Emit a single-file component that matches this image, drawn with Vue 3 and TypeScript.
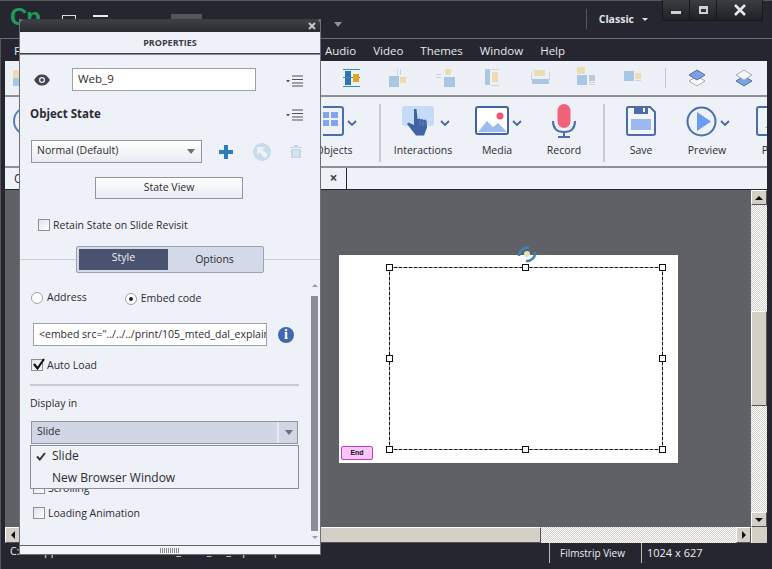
<script setup lang="ts">
interface Shape {
  x: number
  y: number
  w: number
  h: number
  fill: string
}

const B = '#a9c6e3'
const Y = '#ecdcb0'
const L = '#c5d6ea'

// align buttons, only the ones that stick out from behind the panel
const alignIcons: { id: number; gap: number; shapes: Shape[] }[] = [
  { id: 1, gap: 315, shapes: [
    { x: 3, y: 3, w: 17, h: 1, fill: '#3a8fb5' },
    { x: 3, y: 20, w: 17, h: 1, fill: '#3a8fb5' },
    { x: 5, y: 5, w: 6, h: 14, fill: '#2f75b5' },
    { x: 3, y: 11, w: 17, h: 1, fill: '#3a8fb5' },
    { x: 13, y: 8, w: 6, h: 8, fill: '#e2a81e' },
  ] },
  { id: 2, gap: 21, shapes: [
    { x: 4, y: 10, w: 10, h: 11, fill: B },
    { x: 15, y: 11, w: 6, h: 6, fill: Y },
    { x: 12, y: 3, w: 1, h: 6, fill: L },
    { x: 15, y: 3, w: 1, h: 6, fill: L },
  ] },
  { id: 3, gap: 24, shapes: [
    { x: 12, y: 3, w: 6, h: 6, fill: Y },
    { x: 11, y: 11, w: 11, h: 10, fill: B },
    { x: 3, y: 8, w: 5, h: 1, fill: L },
    { x: 3, y: 11, w: 5, h: 1, fill: L },
  ] },
  { id: 4, gap: 24, shapes: [
    { x: 4, y: 3, w: 5, h: 16, fill: B },
    { x: 11, y: 6, w: 6, h: 10, fill: Y },
    { x: 10, y: 3, w: 8, h: 1, fill: L },
    { x: 10, y: 19, w: 8, h: 1, fill: L },
  ] },
  { id: 5, gap: 23, shapes: [
    { x: 6, y: 4, w: 11, h: 6, fill: Y },
    { x: 4, y: 13, w: 17, h: 5, fill: B },
    { x: 3, y: 6, w: 1, h: 8, fill: L },
    { x: 21, y: 6, w: 1, h: 8, fill: L },
  ] },
  { id: 6, gap: 21, shapes: [
    { x: 4, y: 1, w: 8, h: 7, fill: Y },
    { x: 4, y: 9, w: 10, h: 10, fill: B },
    { x: 16, y: 9, w: 6, h: 6, fill: '#b9cbd9' },
    { x: 16, y: 16, w: 6, h: 1, fill: L },
    { x: 16, y: 18, w: 6, h: 1, fill: L },
  ] },
  { id: 7, gap: 24, shapes: [
    { x: 3, y: 5, w: 10, h: 10, fill: B },
    { x: 14, y: 7, w: 6, h: 6, fill: Y },
    { x: 14, y: 14, w: 6, h: 1, fill: L },
  ] },
]

const handles = [
  { id: 'tl', cls: 'h-left h-top' },
  { id: 'tc', cls: 'h-mid h-top' },
  { id: 'tr', cls: 'h-right h-top' },
  { id: 'ml', cls: 'h-left h-center' },
  { id: 'mr', cls: 'h-right h-center' },
  { id: 'bl', cls: 'h-left h-bottom' },
  { id: 'bc', cls: 'h-mid h-bottom' },
  { id: 'br', cls: 'h-right h-bottom' },
]

const menuItems = ['Audio', 'Video', 'Themes', 'Window', 'Help']
</script>

<template>
  <div class="app">
    <header class="titlebar">
      <div class="logo">Cp</div>
      <span class="tb-box tb-box-a"></span>
      <span class="tb-box tb-box-b"></span>
      <span class="tb-box tb-box-c"></span>
      <span class="tb-caret"></span>
      <div class="workspace-switch">
        <span class="switch-sep"></span>
        <span class="switch-label">Classic</span>
        <span class="switch-caret"></span>
      </div>
      <div class="win-buttons">
        <div class="win-btn win-min"><span></span></div>
        <div class="win-btn win-max"><span></span></div>
        <div class="win-btn win-close">
          <svg width="14" height="12" viewBox="0 0 14 12"><path d="M2 1l10 10M12 1L2 11" stroke="#e4e5e8" stroke-width="2.6" /></svg>
        </div>
      </div>
    </header>

    <nav class="menubar">
      <span class="menu-first">F</span>
      <span v-for="m in menuItems" :key="m" class="menu-item">{{ m }}</span>
    </nav>

    <div class="align-bar">
      <span class="left-stub-square"></span>
      <template v-for="icon in alignIcons" :key="icon.id">
        <svg class="align-icon" :style="{ marginLeft: icon.gap + 'px' }" width="24" height="24" viewBox="0 0 24 24">
          <rect v-for="(s, i) in icon.shapes" :key="i" :x="s.x" :y="s.y" :width="s.w" :height="s.h" :fill="s.fill" />
        </svg>
      </template>
      <span class="align-sep"></span>
      <svg class="layer-icon layer-first" width="20" height="20" viewBox="0 0 20 20">
        <path d="M10 8l8 5-8 5-8-5z" fill="#fff" stroke="#a5a8b0" />
        <path d="M10 2l8 5-8 5-8-5z" fill="#7f9fe4" stroke="#4d6ca8" />
      </svg>
      <svg class="layer-icon layer-second" width="20" height="20" viewBox="0 0 20 20">
        <path d="M10 8l8 5-8 5-8-5z" fill="#7f9fe4" stroke="#4d6ca8" />
        <path d="M10 2l8 5-8 5-8-5z" fill="#f5f6fb" stroke="#a5a8b0" />
      </svg>
    </div>

    <div class="ribbon">
      <div class="rb-stub"></div>
      <div class="rb-item rb-objects">
        <svg width="22" height="30" viewBox="0 0 22 30">
          <path d="M-8 1h26a2 2 0 0 1 2 2v24a2 2 0 0 1-2 2H-8" fill="none" stroke="#4a6ea9" stroke-width="2" />
          <path d="M0 6h6v6H0zM8 6h7v6H8zM0 14h6v6H0zM8 14h7v6H8z" fill="#7fa6ee" />
        </svg>
        <svg class="chev" width="10" height="6" viewBox="0 0 10 6"><path d="M1 1l4 4 4-4" fill="none" stroke="#44689f" stroke-width="1.8" /></svg>
        <span class="rb-label">Objects</span>
      </div>
      <span class="rb-sep rb-sep-a"></span>
      <div class="rb-item rb-inter">
        <svg width="32" height="30" viewBox="0 0 32 30">
          <rect x="0" y="0" width="32" height="20" rx="2" fill="#c6dbf8" />
          <path d="M12 3h2.500l1 10 2-.5 1 1 2-.5 1 1 2-.5 1.500 2v6l-3 8H14L5 18l1.500-1.500L12 19z" fill="#3f63a5" />
          <path d="M18 14v5M21 15v5M24 15v5" stroke="#7d97c8" stroke-width="0.7" />
        </svg>
        <svg class="chev" width="10" height="6" viewBox="0 0 10 6"><path d="M1 1l4 4 4-4" fill="none" stroke="#44689f" stroke-width="1.8" /></svg>
        <span class="rb-label">Interactions</span>
      </div>
      <div class="rb-item rb-media">
        <svg width="34" height="30" viewBox="0 0 34 30">
          <rect x="1" y="1" width="32" height="27" rx="2" fill="#fff" stroke="#3f63a5" stroke-width="2" />
          <path d="M3 26l9-11 6 6 5-4 8 8v1H3z" fill="#9cbcf0" />
          <circle cx="25" cy="10" r="3.5" fill="#f0566f" />
        </svg>
        <svg class="chev" width="10" height="6" viewBox="0 0 10 6"><path d="M1 1l4 4 4-4" fill="none" stroke="#44689f" stroke-width="1.8" /></svg>
        <span class="rb-label">Media</span>
      </div>
      <div class="rb-item rb-record">
        <svg width="24" height="34" viewBox="0 0 24 34">
          <rect x="5.500" y="0" width="13" height="24" rx="6.500" fill="#f0627a" />
          <path d="M1 17c0 7 4 11 11 11s11-4 11-11" fill="none" stroke="#4a6ea9" stroke-width="2" />
          <path d="M12 28v4M6 33h12" stroke="#4a6ea9" stroke-width="2" />
        </svg>
        <span class="rb-label">Record</span>
      </div>
      <span class="rb-sep rb-sep-b"></span>
      <div class="rb-item rb-save">
        <svg width="30" height="30" viewBox="0 0 30 30">
          <path d="M2 1h22l5 5v21a2 2 0 0 1-2 2H3a2 2 0 0 1-2-2V2z" fill="#f3f5fb" stroke="#4a6ea9" stroke-width="2" />
          <path d="M8 1h14v7H8z" fill="#4a6ea9" />
          <rect x="17" y="2" width="2" height="4" fill="#f3f5fb" />
          <rect x="5" y="13" width="20" height="11" fill="#9cb8f0" />
        </svg>
        <span class="rb-label">Save</span>
      </div>
      <div class="rb-item rb-preview">
        <svg width="31" height="31" viewBox="0 0 31 31">
          <circle cx="15.500" cy="15.500" r="14" fill="none" stroke="#4a6ea9" stroke-width="2" />
          <path d="M11 6l14 9.500L11 25z" fill="#6c9bf2" />
        </svg>
        <svg class="chev" width="10" height="6" viewBox="0 0 10 6"><path d="M1 1l4 4 4-4" fill="none" stroke="#44689f" stroke-width="1.8" /></svg>
        <span class="rb-label">Preview</span>
      </div>
      <div class="rb-item rb-last">
        <svg width="14" height="30" viewBox="0 0 14 30">
          <path d="M14 1H3a2 2 0 0 0-2 2v24a2 2 0 0 0 2 2h11" fill="none" stroke="#4a6ea9" stroke-width="2" />
          <path d="M9 22l4-4 1 1v3z" fill="#86b98a" />
        </svg>
        <span class="rb-label">P</span>
      </div>
    </div>

    <div class="tabbar">
      <span class="tab-first">O</span>
      <span class="tab-close">×</span>
    </div>

    <main class="workspace">
      <div class="canvas-row">
        <div class="canvas">
          <div class="slide">
            <svg class="spinner" width="20" height="17" viewBox="0 0 20 17">
              <path d="M2 10a8 8 0 0 1 10-8M18 6a8 8 0 0 1-9 9" fill="none" stroke="#3a84b8" stroke-width="2.500" />
              <circle cx="10" cy="8" r="3" fill="#dfe3b8" />
            </svg>
            <div class="web-object">
              <span v-for="h in handles" :key="h.id" class="handle" :class="h.cls"></span>
            </div>
            <div class="end-btn">End</div>
          </div>
        </div>
        <div class="vscroll">
          <div class="sb-btn"><span class="tri tri-up"></span></div>
          <div class="sb-track sb-v-a"></div>
          <div class="sb-thumb sb-v-thumb"></div>
          <div class="sb-track sb-v-b"></div>
          <div class="sb-btn"><span class="tri tri-down"></span></div>
        </div>
      </div>
      <div class="hscroll">
        <div class="sb-btn"><span class="tri tri-left"></span></div>
        <div class="sb-thumb sb-h-thumb"></div>
        <div class="sb-track sb-h-track"></div>
        <div class="sb-btn"><span class="tri tri-right"></span></div>
        <div class="sb-corner"></div>
      </div>
    </main>

    <footer class="statusbar">
      <span class="status-path">C:\xampp\htdocs\onscreenos\105_mted_dal_explain.cptx</span>
      <span class="status-cell status-film">Filmstrip View</span>
      <span class="status-cell status-size">1024 x 627</span>
    </footer>

    <!-- floating properties panel -->
    <aside class="panel">
      <div class="panel-grip">
        <svg width="8" height="8" viewBox="0 0 8 8"><path d="M1 1l6 6M7 1L1 7" stroke="#c4c6cb" stroke-width="2" /></svg>
      </div>
      <div class="panel-head">PROPERTIES</div>

      <div class="row name-row">
        <svg class="eye" width="16" height="12" viewBox="0 0 16 12">
          <path d="M0 6c3-4.500 5-5.500 8-5.500S13 1.500 16 6c-3 4.500-5 5.500-8 5.500S3 10.500 0 6z" fill="#44464e" />
          <circle cx="8" cy="6" r="3" fill="#eff1f8" />
          <circle cx="8" cy="6" r="1.800" fill="#44464e" />
        </svg>
        <div class="input name-input">Web_9</div>
        <svg class="list-menu" width="18" height="12" viewBox="0 0 18 12">
          <path d="M0 5h4L2 7.500z" fill="#555" />
          <path d="M6 1h11M6 4.500h11M6 8h11M6 11h11" stroke="#50525a" stroke-width="1" />
        </svg>
      </div>

      <div class="row state-head">
        <span class="state-title">Object State</span>
        <svg class="list-menu" width="18" height="12" viewBox="0 0 18 12">
          <path d="M0 5h4L2 7.500z" fill="#555" />
          <path d="M6 1h11M6 4.500h11M6 8h11M6 11h11" stroke="#50525a" stroke-width="1" />
        </svg>
      </div>

      <div class="row state-select-row">
        <div class="select state-select">
          <span class="sel-text">Normal (Default)</span>
          <span class="sel-caret"></span>
        </div>
        <svg class="ic-plus" width="14" height="14" viewBox="0 0 14 14">
          <path d="M5 0h4v5h5v4H9v5H5V9H0V5h5z" fill="#2f7dbb" />
        </svg>
        <svg class="ic-go" width="18" height="18" viewBox="0 0 18 18">
          <circle cx="9" cy="9" r="9" fill="#c7dbe8" />
          <path d="M4 4h8l-2.500 2.500L15 12l-3 3-5.500-5.500L4 12z" fill="#eff1f8" />
        </svg>
        <svg class="ic-trash" width="12" height="13" viewBox="0 0 12 13">
          <path d="M0 2h12v1H0zM4 0h4v2H4zM1 4h10v9H1z" fill="#c3d6e3" />
          <path d="M4 5v7M6 5v7M8 5v7" stroke="#eff1f8" stroke-width="0.800" />
        </svg>
      </div>

      <div class="row state-view-row">
        <button class="btn state-view">State View</button>
      </div>

      <label class="row check-row retain-row">
        <span class="check"></span>
        <span class="label">Retain State on Slide Revisit</span>
      </label>

      <div class="tabs-wrap">
        <div class="tabs">
          <div class="tab-on">Style</div>
          <div class="tab-off">Options</div>
        </div>
      </div>

      <div class="panel-scroll">
        <div class="scroll-body">
          <div class="radio-row">
            <span class="radio-opt">
              <span class="radio"></span>
              <span class="label label-up">Address</span>
            </span>
            <span class="radio-opt radio-embed">
              <span class="radio radio-on"></span>
              <span class="label label-up">Embed code</span>
            </span>
          </div>

          <div class="embed-row">
            <div class="input embed-input">&lt;embed src="../../../print/105_mted_dal_explain.swf"</div>
            <div class="info">i</div>
          </div>

          <div class="check-row auto-row">
            <span class="check check-on">
              <svg width="14" height="13" viewBox="0 0 14 13"><path d="M2 6l3.500 4.500L12 1" fill="none" stroke="#111" stroke-width="2.200" /></svg>
            </span>
            <span class="label">Auto Load</span>
          </div>

          <div class="divider"></div>

          <div class="label display-label">Display in</div>

          <div class="display-wrap">
            <div class="select display-select">
              <span class="sel-text">Slide</span>
              <span class="sel-split"></span>
              <span class="sel-caret"></span>
            </div>
            <ul class="dropdown">
              <li>
                <svg width="10" height="9" viewBox="0 0 10 9"><path d="M1 4.500L3.800 7.500 9 1" fill="none" stroke="#333" stroke-width="2" /></svg>
                <span>Slide</span>
              </li>
              <li><span>New Browser Window</span></li>
            </ul>
          </div>

          <div class="check-row scrolling-row">
            <span class="check"></span>
            <span class="label">Scrolling</span>
          </div>
          <div class="check-row loading-row">
            <span class="check"></span>
            <span class="label">Loading Animation</span>
          </div>
        </div>
        <div class="panel-sb">
          <span class="tri-small tri-small-up"></span>
          <div class="panel-sb-thumb"></div>
          <span class="tri-small tri-small-down"></span>
        </div>
      </div>

      <div class="panel-foot"><span class="foot-grip"></span></div>
    </aside>
  </div>
</template>

<style scoped>
.app {
  position: relative;
  width: 772px;
  height: 569px;
  overflow: hidden;
  display: flex;
  flex-direction: column;
  background: #25262f;
  box-shadow: inset 1px 0 0 #55565c;
  font-family: "Open Sans", "Liberation Sans", sans-serif;
  font-size: 10.500px;
  color: #2b2c30;
}

/* title bar */
.titlebar {
  position: relative;
  flex: 0 0 39px;
  display: flex;
  border-top: 1px solid #55565c;
  border-bottom: 1px solid #6d6e74;
  box-sizing: border-box;
  background: #25262f;
}
.logo {
  margin: 3px 0 0 10px;
  font-family: "Liberation Sans", sans-serif;
  font-size: 24px;
  font-weight: 700;
  color: #1e9b5c;
  line-height: 26px;
  letter-spacing: -1px;
}
.tb-box {
  position: absolute;
  top: 14px;
  height: 8px;
  box-sizing: border-box;
}
.tb-box-a { left: 62px; width: 14px; border: 1px solid #dcdcdc; }
.tb-box-b { left: 93px; width: 15px; border-top: 2px solid #e8e8e8; }
.tb-box-c { left: 171px; width: 31px; top: 13px; background: #52545f; height: 8px; }
.tb-caret {
  position: absolute;
  left: 334px;
  top: 21px;
  border: 4px solid transparent;
  border-top: 5px solid #8f9096;
}
.workspace-switch {
  margin-left: auto;
  display: flex;
  align-items: center;
  height: 20px;
  margin-top: 8px;
  margin-right: 124px;
}
.switch-sep { width: 1px; height: 20px; background: #55565c; margin-right: 12px; }
.switch-label { color: #e2e3e6; font-weight: 700; font-size: 10.500px; }
.switch-caret {
  margin: 3px 0 0 8px;
  border: 3px solid transparent;
  border-top: 3px solid #e2e3e6;
}
.win-buttons {
  position: absolute;
  right: 9px;
  top: -1px;
  display: flex;
  height: 20px;
  background: linear-gradient(#3c3d43, #1f2025);
  border: 1px solid #17181c;
  border-top: none;
  border-radius: 0 0 3px 3px;
}
.win-btn {
  display: flex;
  align-items: center;
  justify-content: center;
  width: 27px;
  box-sizing: border-box;
  border-right: 1px solid #17181c;
}
.win-close { width: 45px; border-right: none; }
.win-min span { width: 10px; height: 3px; background: #cfd0d4; margin-top: 4px; }
.win-max span { width: 9px; height: 8px; box-sizing: border-box; border: 2px solid #cfd0d4; border-top-width: 3px; }

/* menu */
.menubar {
  flex: 0 0 22px;
  display: flex;
  align-items: center;
  gap: 17px;
  color: #e6e7ea;
  font-size: 11.500px;
}
.menu-first { margin-left: 14px; margin-right: 288px; }

/* toolbars */
.align-bar {
  flex: 0 0 36px;
  margin: 0 5px;
  display: flex;
  align-items: center;
  background: #eef0f7;
  border-bottom: 2px solid #8f9196;
  box-sizing: border-box;
  padding-left: 8px;
}
.left-stub-square {
  flex: none;
  width: 12px;
  height: 16px;
  background: linear-gradient(#ecdcb0 50%, #a9c6e3 50%);
}
.align-icon { flex: none; }
.align-sep { flex: none; width: 1px; height: 20px; background: #c4c6cc; margin-left: 20px; }
.layer-icon { flex: none; }
.layer-first { margin-left: 21px; }
.layer-second { margin-left: 27px; }

.ribbon {
  flex: 0 0 71px;
  margin: 0 5px;
  position: relative;
  display: flex;
  background: #eff1f8;
  border-bottom: 2px solid #8f9196;
  box-sizing: border-box;
  overflow: hidden;
}
.rb-stub {
  flex: none;
  width: 30px;
  height: 30px;
  margin: 9px 0 0 8px;
  border: 2px solid #5a7db5;
  border-radius: 50%;
  box-sizing: border-box;
}
.rb-item {
  position: relative;
  flex: none;
  display: flex;
  align-items: flex-start;
  padding-top: 9px;
  box-sizing: border-box;
}
.rb-label {
  position: absolute;
  top: 46px;
  left: 50%;
  transform: translateX(-50%);
  white-space: nowrap;
  font-size: 10.500px;
}
.chev { margin: 14px 0 0 5px; flex: none; }
.rb-objects { margin-left: 280px; }
.rb-objects .chev { margin-left: 2px; }
.rb-objects .rb-label { left: 11px; }
.rb-sep { width: 2px; height: 58px; margin-top: 7px; background: #c6c8ce; flex: none; }
.rb-sep-a { margin-left: 22px; }
.rb-inter { margin-left: 21px; }
.rb-inter .chev { margin-left: 6px; }
.rb-inter .rb-label { left: 21px; }
.rb-media { margin-left: 25px; }
.rb-media .chev { margin-left: 3px; }
.rb-media .rb-label { left: 22px; }
.rb-record { margin-left: 30px; padding-top: 7px; }
.rb-sep-b { margin-left: 27px; }
.rb-save { margin-left: 21px; }
.rb-preview { margin-left: 30px; }
.rb-preview .chev { margin-left: 3px; }
.rb-preview .rb-label { left: 21px; }
.rb-last { margin-left: 26px; }
.rb-last .rb-label { left: 9px; }

.tabbar {
  flex: 0 0 22px;
  margin: 0 5px;
  position: relative;
  display: flex;
  align-items: center;
  background: #eff1f8;
  border-bottom: 1px solid #25262f;
  box-sizing: border-box;
}
.tab-first { margin-left: 9px; font-size: 12px; width: 10px; }
.tab-close {
  margin-left: 297px;
  width: 25px;
  height: 21px;
  text-align: center;
  line-height: 19px;
  font-size: 14px;
  font-weight: 700;
  color: #444;
  border-right: 1px solid #25262f;
}

/* canvas */
.workspace {
  flex: 0 0 353px;
  margin: 0 5px;
  display: flex;
  flex-direction: column;
  background: #5f6167;
}
.canvas-row { flex: 1; display: flex; min-height: 0; }
.canvas { flex: 1; position: relative; }
.slide {
  position: absolute;
  left: 334px;
  top: 65px;
  width: 339px;
  height: 208px;
  background: #fff;
}
.spinner { position: absolute; left: 178px; top: -9px; }
.web-object {
  position: absolute;
  left: 50px;
  top: 12px;
  width: 274px;
  height: 183px;
  box-sizing: border-box;
  border: 1px dashed #111;
  background: #a2a2a2;
}
.web-object::before {
  content: '';
  position: absolute;
  inset: 0;
  background: #fff;
}
.handle {
  position: absolute;
  width: 7px;
  height: 7px;
  box-sizing: border-box;
  background: #fff;
  border: 1px solid #111;
}
.h-left { left: -4px; }
.h-mid { left: 132px; }
.h-right { right: -4px; }
.h-top { top: -4px; }
.h-center { top: 87px; }
.h-bottom { bottom: -4px; }
.end-btn {
  position: absolute;
  left: 2px;
  top: 191px;
  width: 32px;
  height: 14px;
  box-sizing: border-box;
  border: 1px solid #c040c0;
  border-radius: 2px;
  background: #fbc4fb;
  text-align: center;
  font-family: "Liberation Sans", sans-serif;
  font-size: 7px;
  font-weight: 700;
  line-height: 11px;
  color: #111;
}
.vscroll {
  flex: 0 0 16px;
  display: flex;
  flex-direction: column;
}
.hscroll { flex: 0 0 16px; display: flex; }
.sb-btn {
  flex: 0 0 15px;
  height: 15px;
  width: 15px;
  display: flex;
  align-items: center;
  justify-content: center;
  background: #d4d0c8;
  border: 1px solid;
  border-color: #fff #55565c #55565c #fff;
  box-sizing: border-box;
}
.vscroll .sb-btn { width: 16px; flex-basis: 15px; }
.hscroll .sb-btn { height: 16px; }
.sb-track {
  background: repeating-conic-gradient(#d4d0c8 0 25%, #fff 0 50%) 0 0 / 2px 2px;
}
.sb-thumb {
  background: #d4d0c8;
  border: 1px solid;
  border-color: #fff #55565c #55565c #fff;
  box-sizing: border-box;
}
.sb-v-a { flex: 0 0 106px; }
.sb-v-thumb { flex: 0 0 95px; }
.sb-v-b { flex: 1; }
.sb-h-thumb { flex: 0 0 521px; }
.sb-h-track { flex: 1; }
.sb-corner { flex: 0 0 16px; background: #d4d0c8; border-left: 1px solid #fff; box-sizing: border-box; }
.tri { width: 0; height: 0; border: 4px solid transparent; }
.tri-up { border-bottom: 4px solid #111; margin-top: -4px; }
.tri-down { border-top: 4px solid #111; margin-top: 4px; }
.tri-left { border-right: 4px solid #111; margin-left: -4px; }
.tri-right { border-left: 4px solid #111; margin-left: 4px; }

/* status bar */
.statusbar {
  flex: 1;
  display: flex;
  align-items: flex-start;
  color: #eceded;
  position: relative;
}
.status-path { margin: 1px 0 0 10px; width: 539px; box-sizing: border-box; white-space: nowrap; overflow: hidden; }
.status-cell {
  height: 20px;
  border-left: 1px solid #b8b9be;
  line-height: 20px;
  box-sizing: border-box;
}
.status-film { width: 92px; padding-left: 10px; font-size: 10px; }
.status-size { padding-left: 5px; font-size: 11px; }

/* properties panel */
.panel {
  position: absolute;
  left: 20px;
  top: 20px;
  width: 300px;
  height: 534px;
  box-sizing: border-box;
  display: flex;
  flex-direction: column;
  background: #eff1f8;
  box-shadow: 0 0 0 1px #6e7076;
}
.panel-grip {
  flex: 0 0 12px;
  display: flex;
  align-items: center;
  justify-content: flex-end;
  padding-right: 4px;
  background: linear-gradient(#3f4045, #2a2b30);
  border-radius: 3px 3px 0 0;
  box-shadow: 0 -1px 0 #3a3b40;
}
.panel-head {
  flex: 0 0 21px;
  text-align: center;
  line-height: 21px;
  font-weight: 700;
  font-size: 9px;
  color: #3b3d45;
  border-bottom: 1px solid #3f4046;
  box-shadow: 0 1px 0 #8a8c92;
}
.row { display: flex; align-items: center; }
.label { white-space: nowrap; }
.label-up { margin-top: -3px; }
.input {
  box-sizing: border-box;
  height: 23px;
  background: #fff;
  border: 1px solid #9ea1ab;
  padding-left: 5px;
  line-height: 20px;
  white-space: nowrap;
  overflow: hidden;
}
.name-row { margin-top: 14px; height: 23px; padding-left: 14px; }
.eye { flex: none; }
.name-input { width: 184px; margin-left: 22px; font-size: 11.500px; }
.list-menu { flex: none; margin-left: 30px; margin-top: 2px; }
.state-head { margin-top: 11px; height: 22px; padding-left: 10px; }
.state-title { font-weight: 700; font-size: 11.500px; color: #2b2c30; width: 255px; }
.state-head .list-menu { margin-left: 1px; margin-top: 4px; }
.state-select-row { margin-top: 16px; padding-left: 11px; height: 23px; }
.select {
  position: relative;
  box-sizing: border-box;
  height: 23px;
  border: 1px solid #9296a3;
  display: flex;
  align-items: center;
  padding-left: 5px;
}
.sel-text { margin-top: -3px; }
.state-select { width: 171px; background: linear-gradient(#fff, #e9ebf2); }
.sel-caret {
  position: absolute;
  right: 6px;
  top: 8px;
  border: 4px solid transparent;
  border-top: 5px solid #6e7078;
}
.ic-plus { margin-left: 17px; flex: none; }
.ic-go { margin-left: 20px; flex: none; }
.ic-trash { margin-left: 19px; flex: none; }
.state-view-row { margin-top: 14px; padding-left: 75px; }
.btn {
  font: inherit;
  color: inherit;
  width: 148px;
  height: 22px;
  padding: 0 0 2px;
  background: linear-gradient(#fff, #e9ebf2);
  border: 1px solid #9296a3;
  border-radius: 0;
}
.check-row { display: flex; align-items: center; }
.retain-row { margin-top: 19px; padding-left: 18px; height: 14px; }
.check {
  flex: none;
  position: relative;
  width: 12px;
  height: 12px;
  box-sizing: border-box;
  border: 1px solid #8e9098;
  background: linear-gradient(135deg, #dfe2ea, #fff);
  margin-right: 3px;
}
.check svg { position: absolute; left: 0; top: -2px; }
.tabs-wrap {
  margin-top: 14px;
  height: 27px;
  display: flex;
  justify-content: center;
  background: linear-gradient(#eff1f8 13px, #c9cbd1 13px, #c9cbd1 14px, #eff1f8 14px);
}
.tabs {
  box-sizing: border-box;
  width: 188px;
  height: 27px;
  padding: 2px;
  display: flex;
  background: #d3d9e8;
  border: 1px solid #9ea1ab;
  border-radius: 2px;
}
.tab-on {
  width: 89px;
  background: #49526f;
  color: #eef0f6;
  text-align: center;
  line-height: 16px;
}
.tab-off { flex: 1; text-align: center; line-height: 20px; }
.panel-scroll { flex: 1; display: flex; min-height: 0; position: relative; }
.scroll-body { flex: 1; padding-top: 16px; }
.radio-row { display: flex; height: 18px; padding-left: 11px; }
.radio-opt { display: flex; align-items: center; }
.radio-embed { margin-left: 38px; margin-top: 2px; }
.radio {
  position: relative;
  width: 12px;
  height: 12px;
  box-sizing: border-box;
  border: 1px solid #a0a2aa;
  border-radius: 50%;
  background: #fff;
  margin-right: 4px;
}
.radio-on::after {
  content: '';
  position: absolute;
  left: 3px;
  top: 3px;
  width: 4px;
  height: 4px;
  border-radius: 50%;
  background: #222;
}
.embed-row { display: flex; align-items: center; margin-top: 16px; padding-left: 13px; }
.embed-input { width: 234px; }
.info {
  width: 16px;
  height: 16px;
  margin-left: 11px;
  border-radius: 50%;
  background: #3f68ad;
  color: #fff;
  text-align: center;
  font-family: "Liberation Serif", serif;
  font-weight: 700;
  font-size: 14px;
  line-height: 16px;
}
.auto-row { margin-top: 12px; padding-left: 11px; height: 13px; }
.check-on { margin-right: 4px; }
.divider { margin: 13px 11px 0 10px; height: 2px; background: #c9cbd1; }
.display-label { margin: 9px 0 0 10px; line-height: 16px; }
.display-wrap { position: relative; margin: 10px 12px 0 11px; }
.display-select { background: #d0d6e4; height: 23px; }
.sel-split {
  position: absolute;
  right: 18px;
  top: 0;
  bottom: 0;
  width: 2px;
  background: #e4e7ef;
}
.display-wrap .sel-caret { right: 4px; }
.dropdown {
  position: absolute;
  z-index: 2;
  left: -1px;
  top: 24px;
  right: -1px;
  margin: 0;
  padding: 0;
  height: 44px;
  box-sizing: border-box;
  list-style: none;
  background: #eff1f8;
  border: 1px solid #8b8e9b;
  font-size: 12px;
}
.dropdown li { position: relative; height: 22px; line-height: 20px; padding-left: 21px; }
.dropdown svg { position: absolute; left: 5px; top: 6px; }
.scrolling-row { margin: 38px 0 0 13px; height: 12px; }
.loading-row { margin: 13px 0 0 13px; height: 12px; }
.panel-sb {
  flex: 0 0 9px;
  display: flex;
  flex-direction: column;
  align-items: center;
  margin-right: 1px;
}
.panel-sb-thumb { flex: 1; width: 7px; margin: 9px 0 5px; background: #8b8d94; }
.tri-small { width: 0; height: 0; border: 3px solid transparent; }
.tri-small-up { border-bottom: 3px solid #9a9ca3; margin-top: 8px; }
.tri-small-down { border-top: 3px solid #9a9ca3; margin-bottom: 3px; }
.panel-foot {
  flex: 0 0 8px;
  border-top: 1px solid #5f6167;
  display: flex;
  justify-content: center;
  align-items: center;
  background: #f3f4f9;
}
.foot-grip {
  width: 20px;
  height: 5px;
  background: repeating-linear-gradient(90deg, #8a8c92 0 1px, transparent 1px 2px);
}
</style>
